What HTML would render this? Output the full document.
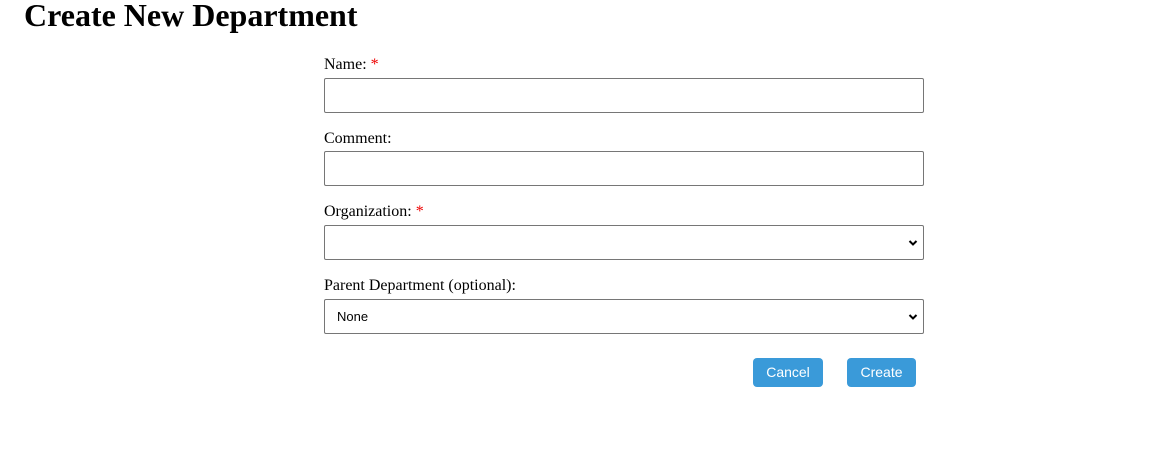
<!DOCTYPE html>
<html><head><style>
body{margin:0;background:#fff;font-family:"Liberation Serif",serif;width:1174px;height:471px;position:relative;overflow:hidden}
h1{position:absolute;left:24px;top:-3px;margin:0;font-size:32px;font-weight:bold;line-height:37px}
.l{position:absolute;left:324px;font-size:16px;line-height:18px}
.l span{color:#e00}
.f{position:absolute;left:324px;width:600px;height:35px;box-sizing:border-box;border:1px solid #767676;border-radius:2px;background:#fff}
.s{font-family:"Liberation Sans",sans-serif;font-size:13px;line-height:33px;padding-left:12px}
.s svg{position:absolute;right:5px;top:13px}
.b{position:absolute;top:358px;height:29px;background:#3a9ad9;color:#fff;border-radius:4px;font-family:"Liberation Sans",sans-serif;font-size:14px;line-height:29px;text-align:center}
</style></head><body>
<h1>Create New Department</h1>
<div class="l" style="top:56px">Name: <span>*</span></div>
<div class="f" style="top:78px"></div>
<div class="l" style="top:130px">Comment:</div>
<div class="f" style="top:151px"></div>
<div class="l" style="top:203px">Organization: <span>*</span></div>
<div class="f s" style="top:225px"><svg width="10" height="8" viewBox="0 0 10 8"><path d="M1.5 2 L5 5.5 L8.5 2" stroke="#000" stroke-width="2" fill="none"/></svg></div>
<div class="l" style="top:277px">Parent Department (optional):</div>
<div class="f s" style="top:299px">None<svg width="10" height="8" viewBox="0 0 10 8"><path d="M1.5 2 L5 5.5 L8.5 2" stroke="#000" stroke-width="2" fill="none"/></svg></div>
<div class="b" style="left:753px;width:70px">Cancel</div>
<div class="b" style="left:847px;width:69px">Create</div>
</body></html>
